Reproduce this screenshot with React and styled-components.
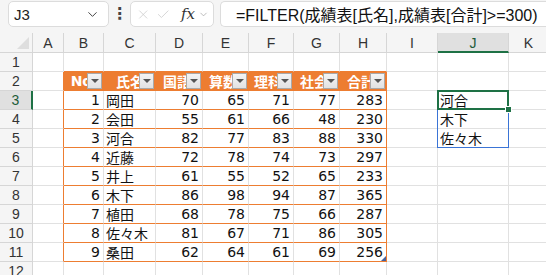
import React from "react";
import styled, { createGlobalStyle, css } from "styled-components";
import { ChevronDown, X, Check } from "lucide-react";

const GlobalStyle = createGlobalStyle`
  html, body {
    margin: 0;
    padding: 0;
    background: #f5f5f5;
    overflow: hidden;
  }
  * { box-sizing: border-box; }
`;

const ORANGE = "#ed7d31";
const GRID = "#e1e1e1";
const GREEN = "#1e7145";
const BLUE = "#3a74d6";

const columns = ["A", "B", "C", "D", "E", "F", "G", "H", "I", "J", "K"];
const widths = [33, 31, 40, 52, 47, 46, 45, 46, 47, 51, 71, 40];

const headers = ["No", "氏名", "国語", "算数", "理科", "社会", "合計"];
const rows = [
  [1, "岡田", 70, 65, 71, 77, 283],
  [2, "会田", 55, 61, 66, 48, 230],
  [3, "河合", 82, 77, 83, 88, 330],
  [4, "近藤", 72, 78, 74, 73, 297],
  [5, "井上", 61, 55, 52, 65, 233],
  [6, "木下", 86, 98, 94, 87, 365],
  [7, "植田", 68, 78, 75, 66, 287],
  [8, "佐々木", 81, 67, 71, 86, 305],
  [9, "桑田", 62, 64, 61, 69, 256],
];
const spill = ["河合", "木下", "佐々木"];

const App = () => {
  const renderRow = (r) => {
    const cells = [];
    cells.push(
      <RowHeader key="h" $selected={r === 3}>
        {r}
      </RowHeader>
    );
    for (let c = 0; c < 11; c++) {
      const col = columns[c];
      const inTable = r >= 2 && r <= 11 && c >= 1 && c <= 7;
      const key = col + r;
      if (col === "A") {
        cells.push(<Cell key={key} $edgeRight={r >= 2 && r <= 11} />);
      } else if (r === 1 && c >= 1 && c <= 7) {
        cells.push(<Cell key={key} $orangeBottom />);
      } else if (inTable && r === 2) {
        cells.push(
          <HeadCell key={key}>
            <HeadLabel>{headers[c - 1]}</HeadLabel>
            <FilterButton>
              <Tri />
            </FilterButton>
          </HeadCell>
        );
      } else if (inTable) {
        const v = rows[r - 3][c - 1];
        cells.push(
          <Cell
            key={key}
            $orangeBottom
            $edgeRight={c === 7}
            $left={c === 2}
          >
            {v}
            {c === 7 && r === 11 && <ResizeCorner />}
          </Cell>
        );
      } else if (col === "J" && r >= 3 && r <= 5) {
        cells.push(
          <SpillCell key={key} $first={r === 3} $last={r === 5}>
            {spill[r - 3]}
            {r === 3 && (
              <ActiveBox>
                <Handle />
              </ActiveBox>
            )}
          </SpillCell>
        );
      } else {
        cells.push(<Cell key={key} />);
      }
    }
    return cells;
  };

  return (
    <>
      <GlobalStyle />
      <Page>
        <FormulaBar>
          <NameBox>
            <span>J3</span>
            <ChevronDown size={15} strokeWidth={1.6} color="#444" />
          </NameBox>
          <Dots>⋮</Dots>
          <IconBox>
            <X size={17} strokeWidth={1.2} color="#c8c8c8" />
            <Check size={17} strokeWidth={1.2} color="#c8c8c8" />
            <Fx>fx</Fx>
            <ChevronDown size={13} strokeWidth={1.4} color="#999" />
          </IconBox>
          <FormulaBox>=FILTER(成績表[氏名],成績表[合計]&gt;=300)</FormulaBox>
        </FormulaBar>
        <Sheet>
          <Corner>
            <CornerTri />
          </Corner>
          {columns.map((c) => (
            <ColHeader key={c} $selected={c === "J"}>
              {c}
            </ColHeader>
          ))}
          {Array.from({ length: 12 }, (_, i) => renderRow(i + 1))}
        </Sheet>
      </Page>
    </>
  );
};

export default App;

const Page = styled.div`
  width: 546px;
  height: 275px;
  overflow: hidden;
  background: #f5f5f5;
  font-family: "DejaVu Sans", "Noto Sans CJK JP", sans-serif;
`;

const FormulaBar = styled.div`
  height: 33px;
  display: flex;
  align-items: flex-start;
  padding: 1px 0 0 8px;
`;

const boxBase = css`
  height: 26px;
  background: #fff;
  border: 1px solid #dcdcdc;
  border-radius: 5px;
  display: flex;
  align-items: center;
`;

const NameBox = styled.div`
  ${boxBase};
  width: 101px;
  justify-content: space-between;
  padding: 0 8px 0 5px;
  font-family: "Liberation Sans", "Noto Sans", sans-serif;
  font-size: 15px;
  color: #222;
`;

const Dots = styled.div`
  width: 21px;
  text-align: center;
  font-size: 16px;
  line-height: 26px;
  color: #444;
  font-weight: bold;
`;

const IconBox = styled.div`
  ${boxBase};
  width: 84px;
  padding: 0 4px 0 5px;
  gap: 6px;
`;

const Fx = styled.span`
  font-family: "DejaVu Serif", "Liberation Serif", serif;
  font-style: italic;
  font-size: 15px;
  color: #333;
  margin-left: 4px;
  margin-right: -3px;
`;

const FormulaBox = styled.div`
  ${boxBase};
  margin-left: 6px;
  flex: 1;
  border-right: none;
  border-radius: 5px 0 0 5px;
  padding-left: 15px;
  font-family: "Liberation Sans", "Noto Sans CJK JP", sans-serif;
  font-size: 16px;
  color: #111;
  white-space: nowrap;
  overflow: hidden;
`;

const Sheet = styled.div`
  display: grid;
  grid-template-columns: ${widths.map((w) => w + "px").join(" ")};
  grid-template-rows: 20px repeat(12, 19px);
  background: #fff;
`;

const Corner = styled.div`
  position: relative;
  background: #f5f5f5;
  border-right: 1px solid #d6d6d6;
  border-bottom: 1px solid #d6d6d6;
`;

const CornerTri = styled.div`
  position: absolute;
  right: 3px;
  bottom: 3px;
  width: 0;
  height: 0;
  border-left: 12px solid transparent;
  border-bottom: 12px solid #dedede;
`;

const ColHeader = styled.div`
  background: ${(p) => (p.$selected ? "#e0e0e0" : "#f5f5f5")};
  border-right: 1px solid #d6d6d6;
  border-bottom: ${(p) => (p.$selected ? `2px solid ${GREEN}` : "1px solid #d6d6d6")};
  display: flex;
  align-items: center;
  justify-content: center;
  font-family: "Liberation Sans", sans-serif;
  font-size: 14px;
  color: ${(p) => (p.$selected ? "#1e5c3a" : "#333")};
  padding-top: ${(p) => (p.$selected ? "1px" : "0")};
`;

const RowHeader = styled.div`
  background: ${(p) => (p.$selected ? "#e0e0e0" : "#f5f5f5")};
  border-right: ${(p) => (p.$selected ? `2px solid ${GREEN}` : "1px solid #d6d6d6")};
  border-bottom: 1px solid #d6d6d6;
  display: flex;
  align-items: center;
  justify-content: center;
  font-family: "Liberation Sans", sans-serif;
  font-size: 14px;
  color: ${(p) => (p.$selected ? "#1e5c3a" : "#333")};
`;

const Cell = styled.div`
  position: relative;
  border-right: 1px solid ${(p) => (p.$edgeRight ? ORANGE : GRID)};
  border-bottom: 1px solid ${(p) => (p.$orangeBottom ? ORANGE : GRID)};
  display: flex;
  align-items: center;
  justify-content: ${(p) => (p.$left ? "flex-start" : "flex-end")};
  padding: 0 3px 0 2px;
  font-size: 14px;
  color: #111;
  white-space: nowrap;
`;

const HeadCell = styled.div`
  position: relative;
  background: ${ORANGE};
  border-bottom: 1px solid ${ORANGE};
  display: flex;
  align-items: center;
  justify-content: flex-end;
  overflow: hidden;
  padding-right: 12px;
`;

const HeadLabel = styled.span`
  color: #fff;
  font-weight: bold;
  font-size: 14px;
  white-space: nowrap;
`;

const FilterButton = styled.div`
  position: absolute;
  right: 2px;
  top: 1px;
  width: 15px;
  height: 16px;
  background: linear-gradient(#f4f4f4, #e2e2e2);
  border: 1px solid #a9a9a9;
  display: flex;
  align-items: center;
  justify-content: center;
`;

const Tri = styled.div`
  width: 0;
  height: 0;
  border-left: 4px solid transparent;
  border-right: 4px solid transparent;
  border-top: 4px solid #555;
`;

const ResizeCorner = styled.div`
  position: absolute;
  right: 0;
  bottom: 0;
  width: 0;
  height: 0;
  border-left: 5px solid transparent;
  border-bottom: 5px solid #44619d;
`;

const SpillCell = styled.div`
  position: relative;
  border-right: 1px solid ${GRID};
  border-bottom: 1px solid ${GRID};
  display: flex;
  align-items: center;
  padding-left: 2px;
  font-size: 14px;
  color: #111;
  white-space: nowrap;
  &::before {
    content: "";
    position: absolute;
    left: -1px;
    right: -1px;
    top: ${(p) => (p.$first ? "-1px" : "0")};
    bottom: -1px;
    border-left: 1px solid ${BLUE};
    border-right: 1px solid ${BLUE};
    border-top: ${(p) => (p.$first ? `1px solid ${BLUE}` : "none")};
    border-bottom: ${(p) => (p.$last ? `1px solid ${BLUE}` : "none")};
    pointer-events: none;
  }
`;

const ActiveBox = styled.div`
  position: absolute;
  left: -1px;
  right: -1px;
  top: -1px;
  bottom: -1px;
  border: 2px solid ${GREEN};
  z-index: 2;
`;

const Handle = styled.div`
  position: absolute;
  right: -5px;
  bottom: -5px;
  width: 7px;
  height: 7px;
  background: ${GREEN};
  border: 1px solid #fff;
`;
